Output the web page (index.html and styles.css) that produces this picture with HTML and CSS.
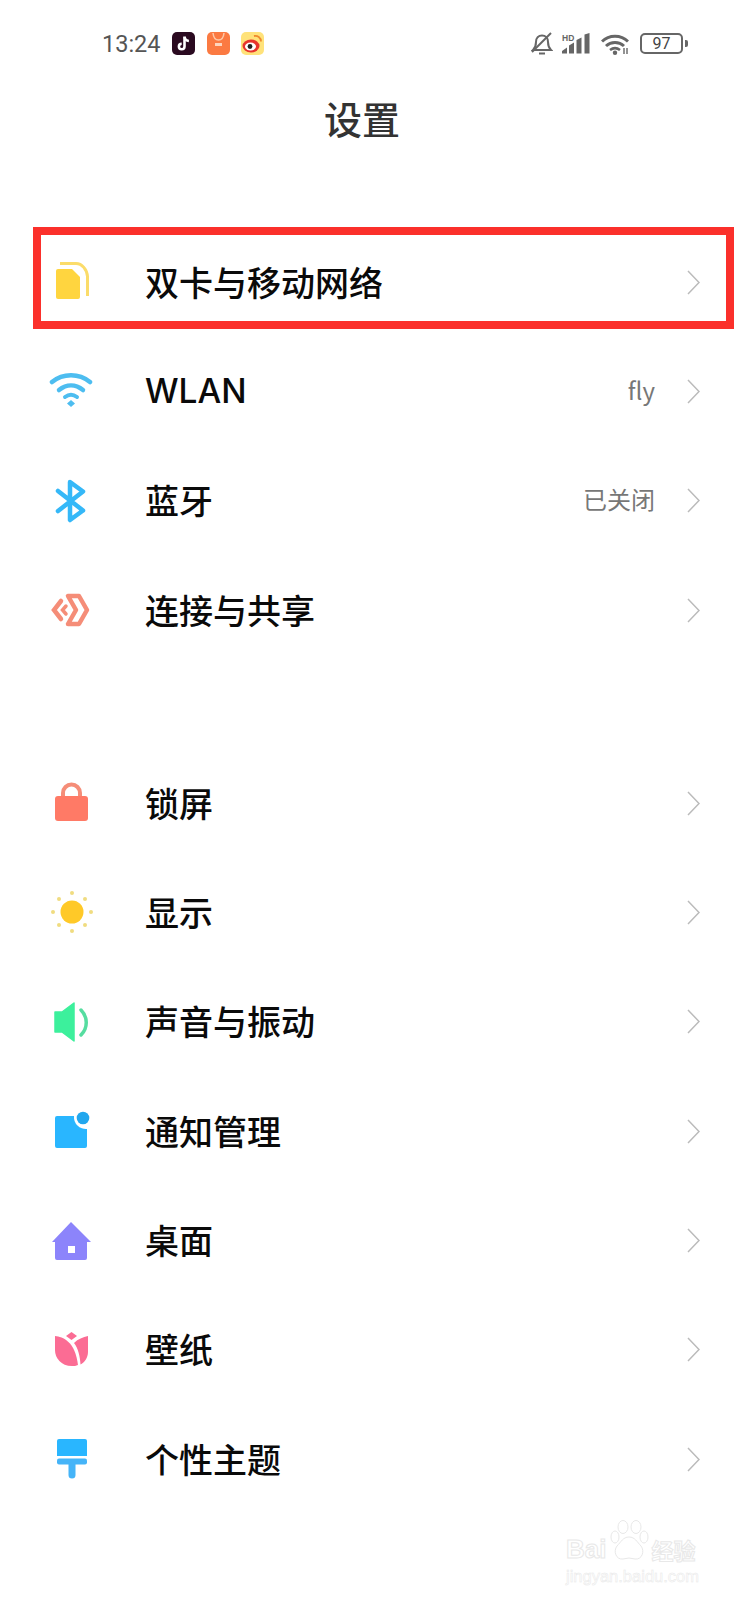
FILE: index.html
```html
<!DOCTYPE html>
<html lang="zh-CN">
  <head>
    <meta charset="UTF-8" />
    <meta name="viewport" content="width=device-width, initial-scale=1.0" />
    <link rel="stylesheet" href="styles.css">
    <title>设置</title>
  </head>
  <body>
    <!-- 状态栏 -->
    <div class="status-bar">
      <span class="time">13:24</span>
      <svg class="app-icon" viewBox="0 0 23 23">
        <rect width="23" height="23" rx="5" fill="#2a0a20" />
        <path d="M12.500 4.500v10a2.800 2.800 0 1 1-2.800-2.800" fill="none" stroke="#fff" stroke-width="2.600" />
        <path d="M12.500 5c.4 2.400 2 3.800 4.400 4" fill="none" stroke="#fff" stroke-width="2.400" />
      </svg>
      <svg class="app-icon" viewBox="0 0 23 23">
        <rect width="23" height="23" rx="5" fill="#fb7a42" />
        <path d="M6 1c.5 5 2.500 7 5.500 7S16.500 6 17 1" fill="none" stroke="#fdc9a8" stroke-width="1.500" />
        <rect x="8" y="11" width="7" height="3" fill="#fdd5bd" />
      </svg>
      <svg class="app-icon" viewBox="0 0 23 23">
        <rect width="23" height="23" rx="5" fill="#ffe27a" />
        <ellipse cx="10" cy="14" rx="8.500" ry="6.500" fill="#e8342c" />
        <ellipse cx="9.500" cy="14.500" rx="5.500" ry="4" fill="#fff" />
        <circle cx="9" cy="14.500" r="2.400" fill="#222" />
        <path d="M13 4c3.500-.8 7 1.500 7 5.500" fill="none" stroke="#f08a2c" stroke-width="1.800" />
      </svg>
      <div class="status-right">
        <svg class="bell" viewBox="0 0 22 23">
          <path d="M2 18h18c-2-2-3-4-3-8 0-4-2.500-6.500-6-6.500S5 6 5 10c0 4-1 6-3 8z" fill="none" stroke="#666" stroke-width="2" />
          <path d="M8 21.500h6" stroke="#666" stroke-width="2" />
          <path d="M1 20 20 1" stroke="#666" stroke-width="2" />
        </svg>
        <svg class="signal" viewBox="0 0 28 21">
          <text x="0" y="7.500" class="hd">HD</text>
          <path d="M0 20.500v-2.500l5-3.500v6zM7 20.500v-8l5-3v11zM14.500 20.500V7l5-2.500v16zM22.500 20.500V1.500l5-1.500v20.500z" fill="#666" />
        </svg>
        <svg class="wifi" viewBox="0 0 28 22">
          <path d="M1 8.500C8 1.500 20 1.500 27 8.500M5 13c5-4.600 13-4.600 18 0" fill="none" stroke="#666" stroke-width="3" />
          <path d="M9 17c3-2.200 7-2.200 10 0" fill="none" stroke="#666" stroke-width="2.600" />
          <circle cx="14" cy="19.800" r="2.200" fill="#666" />
          <path d="M23 15v6M26 15v6" stroke="#666" stroke-width="1.400" />
        </svg>
        <div class="battery"><span class="battery-level">97</span></div>
        <span class="battery-tip"></span>
      </div>
    </div>

    <h1 class="title">设置</h1>

    <div class="group">
      <div class="row">
        <svg class="row-icon" viewBox="0 0 44 44">
          <path d="M11 3.500h16c6 0 11 6 11.500 13V36" fill="none" stroke="#fbdc6a" stroke-width="3" />
          <path d="M9 9h14l8 8v20a2 2 0 0 1-2 2H9a2 2 0 0 1-2-2V11a2 2 0 0 1 2-2z" fill="#ffd53f" />
        </svg>
        <span class="row-label">双卡与移动网络</span>
        <svg class="chevron" viewBox="0 0 13 25"><path d="M1 1l11 11.500L1 24" /></svg>
      </div>
      <div class="row">
        <svg class="row-icon" viewBox="0 0 44 44">
          <g fill="none" stroke="#4dbdf0" stroke-linecap="round">
            <path d="M3 13c11-9 27-9 38 0" stroke-width="4.500" />
            <path d="M10 21c7.500-6 16.500-6 24 0" stroke-width="4.500" />
            <path d="M16 28c4-3 8-3 12 0" stroke-width="4" />
          </g>
          <path d="M22 31l4 3.500-4 3.500-4-3.500z" fill="#4dbdf0" />
        </svg>
        <span class="row-label row-latin">WLAN</span>
        <span class="row-value">fly</span>
        <svg class="chevron" viewBox="0 0 13 25"><path d="M1 1l11 11.500L1 24" /></svg>
      </div>
      <div class="row">
        <svg class="row-icon" viewBox="0 0 44 44">
          <path d="M9 12l25 19.500L21 41V3l13 9.500L9 32" fill="none" stroke="#35b8f8" stroke-width="4.500" stroke-linecap="round" stroke-linejoin="round" />
        </svg>
        <span class="row-label">蓝牙</span>
        <span class="row-value">已关闭</span>
        <svg class="chevron" viewBox="0 0 13 25"><path d="M1 1l11 11.500L1 24" /></svg>
      </div>
      <div class="row">
        <svg class="row-icon" viewBox="0 0 44 44">
          <g fill="none" stroke="#f58d78">
            <path d="M19 8H30L38 22 30 36H19L27 22z" stroke-width="4.500" stroke-linejoin="round" />
            <path d="M12 13 5 22l7 9" stroke-width="4.500" stroke-linecap="round" />
            <path d="M17 18l-3.500 4 3.500 4" stroke-width="3.500" stroke-linecap="round" />
          </g>
        </svg>
        <span class="row-label">连接与共享</span>
        <svg class="chevron" viewBox="0 0 13 25"><path d="M1 1l11 11.500L1 24" /></svg>
      </div>
    </div>

    <div class="group">
      <div class="row">
        <svg class="row-icon" viewBox="0 0 44 44">
          <path d="M14 19v-7a8.500 8.500 0 0 1 17 0v7" fill="none" stroke="#f58d78" stroke-width="4" />
          <rect x="6" y="15" width="33" height="25" rx="3" fill="#ff7a66" />
        </svg>
        <span class="row-label">锁屏</span>
        <svg class="chevron" viewBox="0 0 13 25"><path d="M1 1l11 11.500L1 24" /></svg>
      </div>
      <div class="row">
        <svg class="row-icon" viewBox="0 0 44 44">
          <circle cx="23" cy="22" r="11.500" fill="#ffc928" />
          <g fill="#f0dc80">
            <circle cx="23" cy="3" r="2" />
            <circle cx="23" cy="41" r="2" />
            <circle cx="4" cy="22" r="2" />
            <circle cx="42" cy="22" r="2" />
            <circle cx="10" cy="9" r="2" />
            <circle cx="36" cy="9" r="2" />
            <circle cx="10" cy="35" r="2" />
            <circle cx="36" cy="35" r="2" />
          </g>
        </svg>
        <span class="row-label">显示</span>
        <svg class="chevron" viewBox="0 0 13 25"><path d="M1 1l11 11.500L1 24" /></svg>
      </div>
      <div class="row">
        <svg class="row-icon" viewBox="0 0 44 44">
          <path d="M6 12h7L25 3v38L13 32H6z" fill="#3cf09c" stroke="#3cf09c" stroke-width="1.500" stroke-linejoin="round" />
          <path d="M32 10c7 7 7 18 0 25" fill="none" stroke="#56dda0" stroke-width="3.500" stroke-linecap="round" />
        </svg>
        <span class="row-label">声音与振动</span>
        <svg class="chevron" viewBox="0 0 13 25"><path d="M1 1l11 11.500L1 24" /></svg>
      </div>
      <div class="row">
        <svg class="row-icon" viewBox="0 0 44 44">
          <path d="M8 7h17a12 12 0 0 0 13 13v17a2 2 0 0 1-2 2H8a2 2 0 0 1-2-2V9a2 2 0 0 1 2-2z" fill="#29b6ff" />
          <circle cx="34" cy="9" r="6.300" fill="#22a7ee" />
        </svg>
        <span class="row-label">通知管理</span>
        <svg class="chevron" viewBox="0 0 13 25"><path d="M1 1l11 11.500L1 24" /></svg>
      </div>
      <div class="row">
        <svg class="row-icon" viewBox="0 0 44 44">
          <path fill-rule="evenodd" fill="#8c84fb" d="M22 3l20 20h-4v16a2 2 0 0 1-2 2H8a2 2 0 0 1-2-2V23H3zM19 27v7h7v-7z" />
        </svg>
        <span class="row-label">桌面</span>
        <svg class="chevron" viewBox="0 0 13 25"><path d="M1 1l11 11.500L1 24" /></svg>
      </div>
      <div class="row">
        <svg class="row-icon" viewBox="0 0 44 44">
          <g fill="#fb6c94">
            <path d="M22.500 4l5.500 4-5.500 4-5.500-4z" />
            <path d="M6 8c8 1 20 5 23 29-2 1-4 1-6 1C12 38 6 30 6 22z" />
            <path d="M39 8v16c0 6-4 11-7.500 12.500C31 28 29 20 25 15c4-4 9-6 14-7z" />
          </g>
        </svg>
        <span class="row-label">壁纸</span>
        <svg class="chevron" viewBox="0 0 13 25"><path d="M1 1l11 11.500L1 24" /></svg>
      </div>
      <div class="row">
        <svg class="row-icon" viewBox="0 0 44 44">
          <path d="M10 2h26a2 2 0 0 1 2 2v15H8V4a2 2 0 0 1 2-2z" fill="#29b6ff" />
          <rect x="8" y="21.500" width="30" height="6" rx="2" fill="#45b4f8" />
          <path d="M19.500 27h7v11a3.500 3.500 0 0 1-7 0z" fill="#45b4f8" />
        </svg>
        <span class="row-label">个性主题</span>
        <svg class="chevron" viewBox="0 0 13 25"><path d="M1 1l11 11.500L1 24" /></svg>
      </div>
    </div>

    <!-- 截图上的红框和水印 -->
    <div class="red-box"></div>
    <div class="watermark">
      <div class="wm-logo">
        <span class="wm-latin">Bai</span>
        <svg class="wm-paw" viewBox="0 0 40 44">
          <g fill="#fff" stroke="#e8e8e8" stroke-width="1">
            <ellipse cx="6" cy="17" rx="4" ry="6" />
            <ellipse cx="14" cy="7" rx="5" ry="6.500" />
            <ellipse cx="27" cy="7" rx="5" ry="6.500" />
            <ellipse cx="35" cy="17" rx="4" ry="6" />
            <path d="M20 17c6 0 8 5 12 9 4 5 1 14-6 13-2 0-4-1-6-1s-4 1-6 1c-7 1-10-8-6-13 4-4 6-9 12-9z" />
          </g>
          <text x="20" y="35" class="wm-du">du</text>
        </svg>
        <span class="wm-cn">经验</span>
      </div>
      <div class="wm-url">jingyan.baidu.com</div>
    </div>
  </body>
</html>
```

FILE: styles.css
```css
/* 基本设置 */
* {
  margin: 0;
  padding: 0;
  box-sizing: border-box;
}

body {
  position: relative;
  height: 1600px;
  overflow: hidden;
  background-color: #fff;
  color: #111;
  font-family: "Noto Sans CJK SC", "Noto Sans", sans-serif;
}

/* 状态栏 */
.status-bar {
  display: flex;
  align-items: center;
  height: 23px;
  margin-top: 32px;
  padding: 0 50px 0 102px;
}

.time {
  width: 70px;
  font-family: Roboto, sans-serif;
  font-size: 23.500px;
  color: #555;
}

.app-icon {
  width: 23px;
  height: 23px;
  margin-right: 11.500px;
}

.status-right {
  display: flex;
  align-items: center;
  margin-left: auto;
}

.bell {
  width: 22px;
  height: 23px;
  margin-right: 9px;
}

.signal {
  width: 28px;
  height: 21px;
  margin-right: 11px;
}

.hd {
  font-family: "Liberation Sans", sans-serif;
  font-size: 8.500px;
  font-weight: bold;
  fill: #666;
}

.wifi {
  width: 28px;
  height: 22px;
  margin-right: 11px;
}

.battery {
  display: flex;
  align-items: center;
  justify-content: center;
  width: 43px;
  height: 21px;
  border: 2px solid #666;
  border-radius: 5px;
}

.battery-level {
  font-family: Roboto, sans-serif;
  font-size: 16px;
  color: #444;
}

.battery-tip {
  width: 3px;
  height: 7px;
  margin-left: 2px;
  background-color: #666;
  border-radius: 0 2px 2px 0;
}

.title {
  height: 48px;
  margin-top: 39px;
  padding-right: 14px;
  font-size: 38px;
  font-weight: 500;
  line-height: 48px;
  color: #333;
  text-align: center;
}

/* 列表 */
.group {
  margin-top: 85.400px;
}

.group + .group {
  margin-top: 83.400px;
}

.row {
  display: flex;
  align-items: center;
  height: 109.400px;
  padding: 0 38px 0 49px;
}

.row-icon {
  flex-shrink: 0;
  width: 44px;
  height: 44px;
  margin-right: 52px;
}

.row-label {
  margin-bottom: 2px;
  font-size: 34px;
  font-weight: 500;
  color: #0a0a0a;
}

.row-latin {
  margin-bottom: 0;
  font-family: Inter, sans-serif;
  font-size: 33.500px;
}

.row-value {
  margin-bottom: 4px;
  margin-left: auto;
  font-size: 24px;
  color: #777;
}

.chevron {
  width: 13px;
  height: 25px;
  margin-left: 32px;
  fill: none;
  stroke: #bbb;
  stroke-width: 1.500;
}

.row-label + .chevron {
  margin-left: auto;
}

/* 红框 */
.red-box {
  position: absolute;
  top: 227px;
  left: 33px;
  width: 701px;
  height: 102px;
  border: 8px solid #fb302b;
}

/* 水印 */
.watermark {
  position: absolute;
  top: 1518px;
  left: 566px;
  width: 134px;
  color: #fff;
  -webkit-text-stroke: 1px #e8e8e8;
}

.wm-logo {
  display: flex;
  align-items: flex-end;
  height: 46px;
}

.wm-latin {
  font-family: "Liberation Sans", sans-serif;
  font-size: 26px;
  font-weight: bold;
  line-height: 30px;
}

.wm-paw {
  width: 40px;
  height: 44px;
  margin: 0 2px 0 3px;
}

.wm-du {
  font-family: "Liberation Sans", sans-serif;
  font-size: 12px;
  font-weight: bold;
  text-anchor: middle;
  fill: #fff;
  -webkit-text-stroke: 0.500px #e8e8e8;
}

.wm-cn {
  font-size: 22px;
  font-weight: bold;
  line-height: 30px;
  white-space: nowrap;
}

.wm-url {
  margin-top: 3px;
  font-family: "Liberation Sans", sans-serif;
  font-size: 16.500px;
  line-height: 18px;
  white-space: nowrap;
  -webkit-text-stroke: 0.500px #e8e8e8;
}
```
